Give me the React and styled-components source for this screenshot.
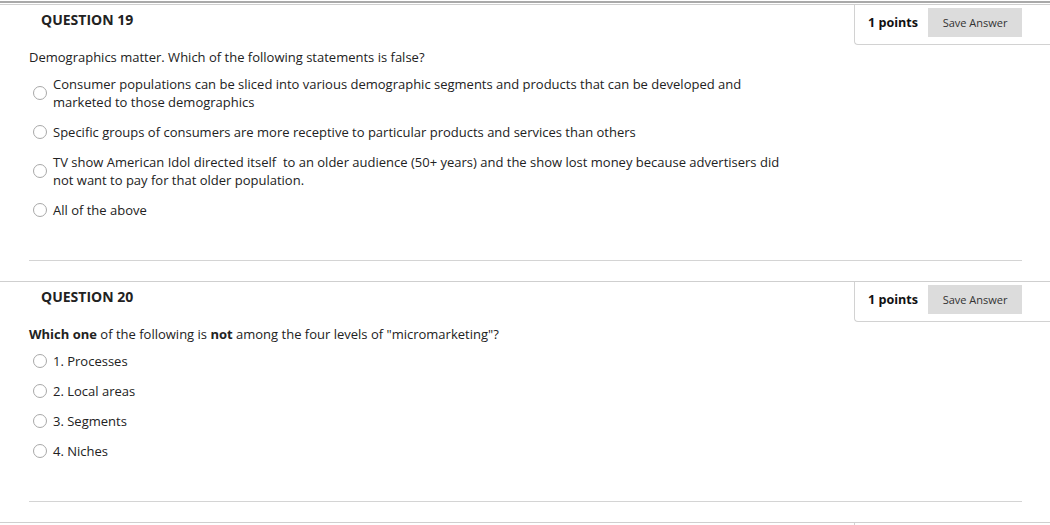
import React from 'react'
import styled, { createGlobalStyle } from 'styled-components'

const GlobalStyle = createGlobalStyle`
  html, body {
    margin: 0;
    padding: 0;
    background: #fff;
    overflow: hidden;
  }
  body {
    font-family: "Open Sans", "Noto Sans", Arial, sans-serif;
    font-size: 13px;
    color: #333;
  }
`

const Page = styled.div`
  width: 1050px;
  padding-top: 1px;
`

const TopRule = styled.div`
  height: 2px;
  background: #a9a9a9;
  margin-bottom: 1px;
`

const Block = styled.section`
  border-top: 1px solid #cfcfcf;
  margin-bottom: 20px;
`

const HeaderRow = styled.div`
  display: flex;
  justify-content: space-between;
  align-items: flex-start;
`

const Title = styled.h3`
  margin: 0;
  padding: 6px 0 0 41px;
  font-size: 14px;
  line-height: 18px;
  font-weight: 700;
  color: #222;
`

const PointsBox = styled.div`
  display: flex;
  align-items: center;
  gap: 10px;
  width: 196px;
  box-sizing: border-box;
  height: 40px;
  padding: 3px 28px 8px 13px;
  border-left: 1px solid #d2d2d2;
  border-bottom: 1px solid #d2d2d2;
  border-bottom-left-radius: 4px;
`

const Points = styled.span`
  font-weight: 700;
  font-size: 12.6px;
  color: #111;
  white-space: nowrap;
`

const SaveButton = styled.button`
  width: 94px;
  height: 29px;
  border: none;
  background: #dcdcdc;
  font-family: inherit;
  font-size: 11px;
  color: #333;
  padding: 0;
`

const Body = styled.div`
  padding: 3px 28px 0 29px;
`

const Prompt = styled.p`
  margin: 0 0 9px;
  line-height: 18px;
  color: #222;

  b {
    font-weight: 700;
  }
`

const Options = styled.ul`
  list-style: none;
  margin: 0;
  padding: 0;
`

const Option = styled.li`
  display: flex;
  align-items: center;
  margin-bottom: 12px;
`

const Radio = styled.span`
  flex: none;
  width: 12px;
  height: 12px;
  margin: 0 6px 0 4px;
  border: 1px solid #a8a8a8;
  border-radius: 50%;
  background: #fff;
`

const Label = styled.span`
  line-height: 18px;
  max-width: 740px;
  color: #222;
`

const Divider = styled.hr`
  margin: 41px 0 0;
  border: none;
  border-top: 1px solid #d4d4d4;
  width: 993px;
`

const questions = [
  {
    n: 19,
    prompt: 'Demographics matter. Which of the following statements is false?',
    options: [
      'Consumer populations can be sliced into various demographic segments and products that can be developed and marketed to those demographics',
      'Specific groups of consumers are more receptive to particular products and services than others',
      'TV show American Idol directed itself \u00a0to an older audience (50+ years) and the show lost money because advertisers did not want to pay for that older population.',
      'All of the above',
    ],
  },
  {
    n: 20,
    prompt: (
      <>
        <b>Which one</b> of the following is <b>not</b> among the four levels of "micromarketing"?
      </>
    ),
    options: ['1. Processes', '2. Local areas', '3. Segments', '4. Niches'],
  },
]

const Question = ({ q }) => (
  <Block>
    <HeaderRow>
      <Title>QUESTION {q.n}</Title>
      <PointsBox>
        <Points>1 points</Points>
        <SaveButton>Save Answer</SaveButton>
      </PointsBox>
    </HeaderRow>
    <Body>
      <Prompt>{q.prompt}</Prompt>
      <Options>
        {q.options.map((o, i) => (
          <Option key={i}>
            <Radio />
            <Label>{o}</Label>
          </Option>
        ))}
      </Options>
      <Divider />
    </Body>
  </Block>
)

const App = () => (
  <Page>
    <GlobalStyle />
    <TopRule />
    {questions.map(q => <Question key={q.n} q={q} />)}
    <Block>
      <HeaderRow>
        <Title />
        <PointsBox />
      </HeaderRow>
    </Block>
  </Page>
)

export default App
